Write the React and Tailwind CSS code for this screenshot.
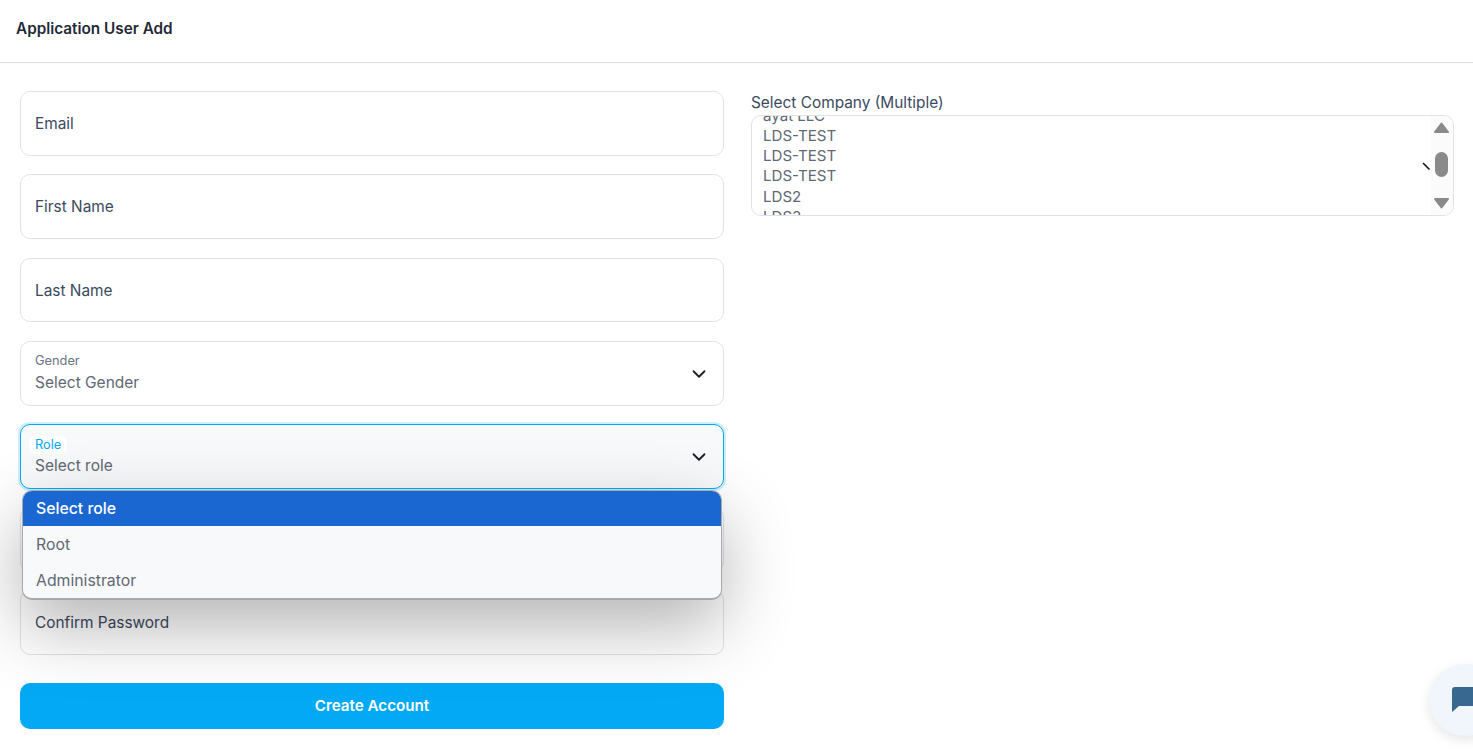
import { ChevronDown } from 'lucide-react';

const font = 'font-["Inter","Noto_Sans",sans-serif]';

function Field({ label }) {
  return (
    <div className="h-[64.8px] rounded-[10px] border border-[#dfe3e8] px-[14px] pt-[22px] text-[15.4px] leading-[20px] text-[#3b4a5e]">
      {label}
    </div>
  );
}

function SelectField({ label, value, active }) {
  return (
    <div
      className={
        active
          ? 'flex h-[64.8px] items-center justify-between rounded-[10px] border border-[#04a9f5] bg-[#f8f9fa] pl-[14px] pr-[13px] shadow-[0_0_0_2px_rgba(4,169,245,0.2)]'
          : 'flex h-[64.8px] items-center justify-between rounded-[10px] border border-[#dfe3e8] pl-[14px] pr-[13px]'
      }
    >
      <div>
        <div
          className={
            active
              ? '-mx-[6px] w-fit rounded-[6px] bg-white px-[6px] text-[12.8px] leading-[18px] text-[#04a9f5]'
              : 'text-[12.8px] leading-[16px] text-[#6b7280]'
          }
        >
          {label}
        </div>
        <div className={active ? 'mt-[2px] text-[15.5px] leading-[20px] text-[#5f6873]' : 'mt-[4px] text-[15.5px] leading-[20px] text-[#5f6873]'}>
          {value}
        </div>
      </div>
      <ChevronDown size={22} strokeWidth={2} className="mt-px text-[#1a1f26]" />
    </div>
  );
}

export default function App() {
  const companies = ['ayat LLC', 'LDS-TEST', 'LDS-TEST', 'LDS-TEST', 'LDS2', 'LDS3'];

  return (
    <div className={`relative h-[751px] overflow-hidden bg-white ${font}`}>
      <div className="flex h-[63px] items-center border-b border-[#dfe3e8] pb-[4px] pl-4 text-[15.3px] font-semibold text-[#1f2937]">
        Application User Add
      </div>

      <div className="grid grid-cols-[704px_703px] gap-x-[27px] px-5 pt-[28.3px]">
        {/* left column */}
        <div className="relative flex flex-col gap-[18.4px]">
          <Field label="Email" />
          <Field label="First Name" />
          <Field label="Last Name" />
          <SelectField label="Gender" value="Select Gender" />
          <SelectField label="Role" value="Select role" active />
          <Field label="Password" />
          <Field label="Confirm Password" />
          <button className="mt-[9.3px] h-[46px] rounded-[10px] bg-[#04a9f5] text-[15.2px] font-semibold text-white">
            Create Account
          </button>

          {/* open role menu */}
          <div className="absolute left-[2px] top-[398.7px] w-[700px] overflow-hidden rounded-[10px] border border-b-2 border-[#a9a9a9] bg-[#f8f9fb] text-[15.8px] text-[#5f6873] shadow-[0_26px_70px_rgba(0,0,0,0.3)]">
            <div className="flex h-[35px] items-center bg-[#1a67d2] pl-[13px] font-medium text-white">Select role</div>
            <div className="flex h-[36px] items-center pl-[13px] pt-[2px]">Root</div>
            <div className="flex h-[36px] items-center pl-[13px] pt-[2px]">Administrator</div>
          </div>
        </div>

        {/* right column */}
        <div className="pt-[1.5px]">
          <div className="h-[22px] text-[15.4px] leading-[20px] text-[#3b4a5e]">Select Company (Multiple)</div>
          <div className="relative h-[101px] overflow-hidden rounded-[10px] border border-[#dfe3e8] pl-[11px]">
            <div className="-mt-[10px] text-[15.1px] leading-[20.2px] text-[#5f6873]">
              {companies.map((c, i) => (
                <div key={i}>{c}</div>
              ))}
            </div>

            {/* scrollbar */}
            <div className="absolute bottom-0 right-0 top-0 flex w-[22px] flex-col items-center bg-[#fbfbfb] pr-px pt-[6px]">
              <svg width="15" height="11" viewBox="0 0 15 11">
                <path d="M7.5 1.5 L14 10 L1 10 Z" fill="#8a8a8a" stroke="#8a8a8a" strokeWidth="2" strokeLinejoin="round" />
              </svg>
              <div className="mt-[19px] h-[25px] w-[13px] shrink-0 rounded-full bg-[#8a8a8a]" />
              <svg className="mt-[21px]" width="15" height="11" viewBox="0 0 15 11">
                <path d="M1 1 L14 1 L7.5 9.5 Z" fill="#8a8a8a" stroke="#8a8a8a" strokeWidth="2" strokeLinejoin="round" />
              </svg>
            </div>
            <svg className="absolute left-[670px] top-[46px]" width="9" height="9" viewBox="0 0 9 9">
              <path d="M1 1 L7.5 7.5" stroke="#111" strokeWidth="1.6" />
            </svg>
          </div>
        </div>
      </div>

      {/* chat bubble */}
      <div className="absolute left-[1429px] top-[664px] flex h-[72px] w-[72px] items-center rounded-full bg-[#f0f6fc] pl-[23px] shadow-[0_4px_12px_rgba(0,0,0,0.1)]">
        <svg width="30" height="26" viewBox="0 0 30 26">
          <path d="M3 0 H30 V19 H7 L0 25 V3 A3 3 0 0 1 3 0 Z" fill="#38688f" />
        </svg>
      </div>
    </div>
  );
}
